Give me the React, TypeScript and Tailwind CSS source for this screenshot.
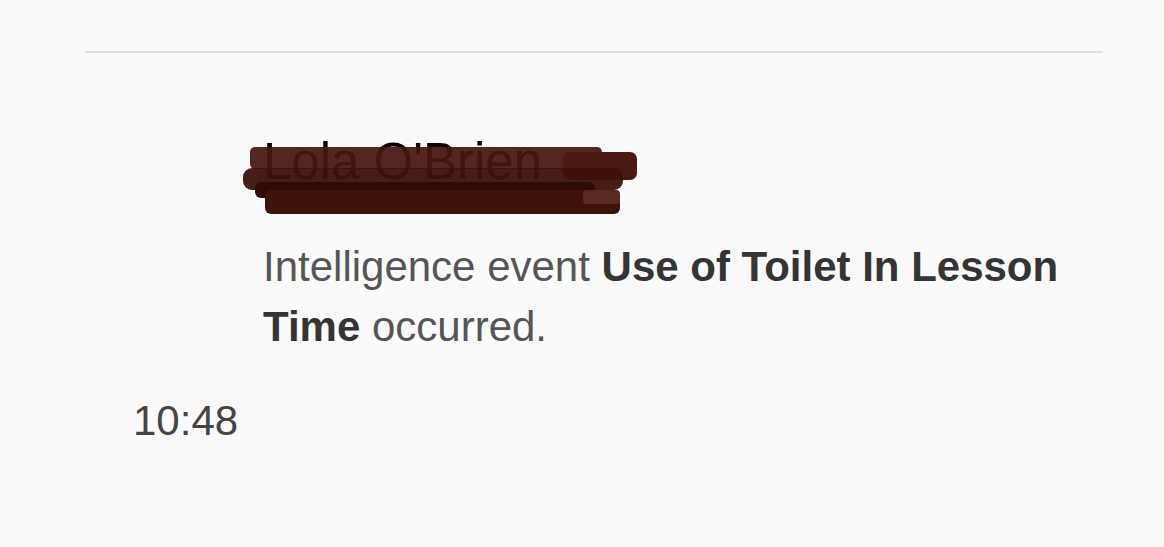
export default function App() {
  return (
    <div className="w-[1164px] h-[547px] bg-[#fafafa] overflow-hidden font-['Liberation_Sans',Arial,sans-serif] flex flex-col">
      <div className="pt-[51px] px-[85px]">
        <div className="h-[2px] w-[1018px] bg-[#e0e0e0]" />
      </div>

      <div className="pt-[85px] pl-[263px] flex flex-col">
        <div className="relative h-[76px] w-fit">
          <span className="text-[51px] leading-[48px] text-[#0e0201]">Lola O'Brien</span>
          {/* redaction scribble */}
          <div className="absolute left-[-13px] top-[9px] w-[352px] h-[22px] rounded-[5px] bg-[#461510]/[0.93]" />
          <div className="absolute left-[300px] top-[14px] w-[74px] h-[28px] rounded-[7px] bg-[#4a1a12]" />
          <div className="absolute left-[-20px] top-[30px] w-[380px] h-[22px] rounded-[9px] bg-[#3c110b]/95" />
          <div className="absolute left-[-8px] top-[44px] w-[340px] h-[16px] rounded-[6px] bg-[#2e0b06]" />
          <div className="absolute left-[2px] top-[52px] w-[355px] h-[24px] rounded-[6px] bg-[#3e120b]" />
          <div className="absolute left-[320px] top-[52px] w-[37px] h-[14px] rounded-[4px] bg-[#5a2a22]" />
        </div>

        <p className="mt-[23px] text-[42px] leading-[60px] text-[#555555] max-w-[850px]">
          Intelligence event <span className="font-bold text-[#343434]">Use of Toilet In Lesson Time</span> occurred.
        </p>
      </div>

      <div className="pt-[40px] pl-[133px] text-[42px] leading-[48px] text-[#444444]">10:48</div>
    </div>
  );
}
